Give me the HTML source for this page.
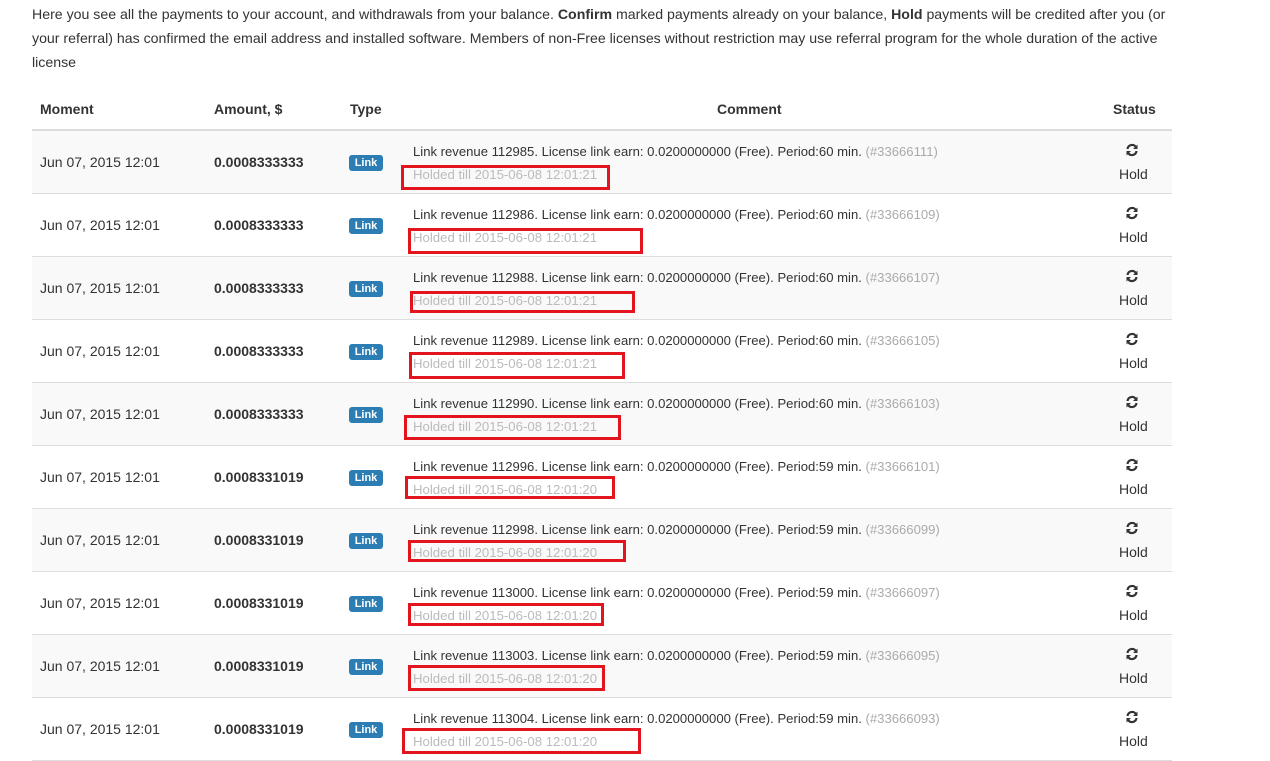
<!DOCTYPE html>
<html><head><meta charset="utf-8"><style>
body{margin:0;width:1270px;height:760px;overflow:hidden;background:#fff;font-family:"Liberation Sans",Arial,sans-serif;color:#333;position:relative}
.intro{position:absolute;left:32px;top:2px;font-size:14.15px;line-height:24px;white-space:nowrap}
.hdr{position:absolute;top:88px;left:32px;width:1140px;height:41px;border-bottom:2px solid #ddd;font-weight:bold;font-size:14px}
.hdr span{position:absolute;top:13px}
.row{position:absolute;left:32px;width:1140px;height:62px;border-bottom:1px solid #ddd;font-size:14px}
.row.g{background:#f9f9f9}
.row .d{position:absolute;left:8px;top:23px}
.row .a{position:absolute;left:182px;top:23px;font-weight:bold}
.row .l{position:absolute;left:317px;top:24px;width:34px;height:16px;background:#2c7db3;color:#fff;font-size:11px;font-weight:bold;text-align:center;line-height:16px;border-radius:3px}
.row .c1{position:absolute;left:381px;top:13px;font-size:13.1px}
.row .c1 i{font-style:normal;color:#aaa}
.row .c2{position:absolute;left:381px;top:36px;font-size:13.2px;color:#bbb}
.row .ic{position:absolute;left:1093px;top:12px}
.row .h{position:absolute;left:1087px;top:35px}
.rb{position:absolute;border:3px solid #e2141e;box-sizing:border-box}
</style></head><body>
<div class="intro">Here you see all the payments to your account, and withdrawals from your balance. <b>Confirm</b> marked payments already on your balance, <b>Hold</b> payments will be credited after you (or<br>your referral) has confirmed the email address and installed software. Members of non-Free licenses without restriction may use referral program for the whole duration of the active<br>license</div>
<div class="hdr"><span style="left:8px">Moment</span><span style="left:182px">Amount, $</span><span style="left:318px">Type</span><span style="left:685px">Comment</span><span style="left:1081px">Status</span></div>

<div class="row g" style="top:131px"><span class="d">Jun 07, 2015 12:01</span><span class="a">0.0008333333</span><span class="l">Link</span><span class="c1">Link revenue 112985. License link earn: 0.0200000000 (Free). Period:60 min. <i>(#33666111)</i></span><span class="c2">Holded till 2015-06-08 12:01:21</span><svg class="ic" width="14" height="14" viewBox="0 0 14 14"><path d="M2.5 6A4.6 4.6 0 0 1 11 4.2M11.5 8A4.6 4.6 0 0 1 3 9.8" stroke="#333" stroke-width="2.2" fill="none"/><path d="M12.5 1.5v4.5H8z M1.5 12.5V8H6z" fill="#333"/></svg><span class="h">Hold</span></div>
<div class="row" style="top:194px"><span class="d">Jun 07, 2015 12:01</span><span class="a">0.0008333333</span><span class="l">Link</span><span class="c1">Link revenue 112986. License link earn: 0.0200000000 (Free). Period:60 min. <i>(#33666109)</i></span><span class="c2">Holded till 2015-06-08 12:01:21</span><svg class="ic" width="14" height="14" viewBox="0 0 14 14"><path d="M2.5 6A4.6 4.6 0 0 1 11 4.2M11.5 8A4.6 4.6 0 0 1 3 9.8" stroke="#333" stroke-width="2.2" fill="none"/><path d="M12.5 1.5v4.5H8z M1.5 12.5V8H6z" fill="#333"/></svg><span class="h">Hold</span></div>
<div class="row g" style="top:257px"><span class="d">Jun 07, 2015 12:01</span><span class="a">0.0008333333</span><span class="l">Link</span><span class="c1">Link revenue 112988. License link earn: 0.0200000000 (Free). Period:60 min. <i>(#33666107)</i></span><span class="c2">Holded till 2015-06-08 12:01:21</span><svg class="ic" width="14" height="14" viewBox="0 0 14 14"><path d="M2.5 6A4.6 4.6 0 0 1 11 4.2M11.5 8A4.6 4.6 0 0 1 3 9.8" stroke="#333" stroke-width="2.2" fill="none"/><path d="M12.5 1.5v4.5H8z M1.5 12.5V8H6z" fill="#333"/></svg><span class="h">Hold</span></div>
<div class="row" style="top:320px"><span class="d">Jun 07, 2015 12:01</span><span class="a">0.0008333333</span><span class="l">Link</span><span class="c1">Link revenue 112989. License link earn: 0.0200000000 (Free). Period:60 min. <i>(#33666105)</i></span><span class="c2">Holded till 2015-06-08 12:01:21</span><svg class="ic" width="14" height="14" viewBox="0 0 14 14"><path d="M2.5 6A4.6 4.6 0 0 1 11 4.2M11.5 8A4.6 4.6 0 0 1 3 9.8" stroke="#333" stroke-width="2.2" fill="none"/><path d="M12.5 1.5v4.5H8z M1.5 12.5V8H6z" fill="#333"/></svg><span class="h">Hold</span></div>
<div class="row g" style="top:383px"><span class="d">Jun 07, 2015 12:01</span><span class="a">0.0008333333</span><span class="l">Link</span><span class="c1">Link revenue 112990. License link earn: 0.0200000000 (Free). Period:60 min. <i>(#33666103)</i></span><span class="c2">Holded till 2015-06-08 12:01:21</span><svg class="ic" width="14" height="14" viewBox="0 0 14 14"><path d="M2.5 6A4.6 4.6 0 0 1 11 4.2M11.5 8A4.6 4.6 0 0 1 3 9.8" stroke="#333" stroke-width="2.2" fill="none"/><path d="M12.5 1.5v4.5H8z M1.5 12.5V8H6z" fill="#333"/></svg><span class="h">Hold</span></div>
<div class="row" style="top:446px"><span class="d">Jun 07, 2015 12:01</span><span class="a">0.0008331019</span><span class="l">Link</span><span class="c1">Link revenue 112996. License link earn: 0.0200000000 (Free). Period:59 min. <i>(#33666101)</i></span><span class="c2">Holded till 2015-06-08 12:01:20</span><svg class="ic" width="14" height="14" viewBox="0 0 14 14"><path d="M2.5 6A4.6 4.6 0 0 1 11 4.2M11.5 8A4.6 4.6 0 0 1 3 9.8" stroke="#333" stroke-width="2.2" fill="none"/><path d="M12.5 1.5v4.5H8z M1.5 12.5V8H6z" fill="#333"/></svg><span class="h">Hold</span></div>
<div class="row g" style="top:509px"><span class="d">Jun 07, 2015 12:01</span><span class="a">0.0008331019</span><span class="l">Link</span><span class="c1">Link revenue 112998. License link earn: 0.0200000000 (Free). Period:59 min. <i>(#33666099)</i></span><span class="c2">Holded till 2015-06-08 12:01:20</span><svg class="ic" width="14" height="14" viewBox="0 0 14 14"><path d="M2.5 6A4.6 4.6 0 0 1 11 4.2M11.5 8A4.6 4.6 0 0 1 3 9.8" stroke="#333" stroke-width="2.2" fill="none"/><path d="M12.5 1.5v4.5H8z M1.5 12.5V8H6z" fill="#333"/></svg><span class="h">Hold</span></div>
<div class="row" style="top:572px"><span class="d">Jun 07, 2015 12:01</span><span class="a">0.0008331019</span><span class="l">Link</span><span class="c1">Link revenue 113000. License link earn: 0.0200000000 (Free). Period:59 min. <i>(#33666097)</i></span><span class="c2">Holded till 2015-06-08 12:01:20</span><svg class="ic" width="14" height="14" viewBox="0 0 14 14"><path d="M2.5 6A4.6 4.6 0 0 1 11 4.2M11.5 8A4.6 4.6 0 0 1 3 9.8" stroke="#333" stroke-width="2.2" fill="none"/><path d="M12.5 1.5v4.5H8z M1.5 12.5V8H6z" fill="#333"/></svg><span class="h">Hold</span></div>
<div class="row g" style="top:635px"><span class="d">Jun 07, 2015 12:01</span><span class="a">0.0008331019</span><span class="l">Link</span><span class="c1">Link revenue 113003. License link earn: 0.0200000000 (Free). Period:59 min. <i>(#33666095)</i></span><span class="c2">Holded till 2015-06-08 12:01:20</span><svg class="ic" width="14" height="14" viewBox="0 0 14 14"><path d="M2.5 6A4.6 4.6 0 0 1 11 4.2M11.5 8A4.6 4.6 0 0 1 3 9.8" stroke="#333" stroke-width="2.2" fill="none"/><path d="M12.5 1.5v4.5H8z M1.5 12.5V8H6z" fill="#333"/></svg><span class="h">Hold</span></div>
<div class="row" style="top:698px"><span class="d">Jun 07, 2015 12:01</span><span class="a">0.0008331019</span><span class="l">Link</span><span class="c1">Link revenue 113004. License link earn: 0.0200000000 (Free). Period:59 min. <i>(#33666093)</i></span><span class="c2">Holded till 2015-06-08 12:01:20</span><svg class="ic" width="14" height="14" viewBox="0 0 14 14"><path d="M2.5 6A4.6 4.6 0 0 1 11 4.2M11.5 8A4.6 4.6 0 0 1 3 9.8" stroke="#333" stroke-width="2.2" fill="none"/><path d="M12.5 1.5v4.5H8z M1.5 12.5V8H6z" fill="#333"/></svg><span class="h">Hold</span></div>

<div class="rb" style="left:401px;top:165px;width:209px;height:25px"></div>
<div class="rb" style="left:408px;top:228px;width:235px;height:26px"></div>
<div class="rb" style="left:410px;top:291px;width:225px;height:22px"></div>
<div class="rb" style="left:409px;top:352px;width:216px;height:27px"></div>
<div class="rb" style="left:404px;top:415px;width:217px;height:25px"></div>
<div class="rb" style="left:405px;top:476px;width:210px;height:23px"></div>
<div class="rb" style="left:408px;top:540px;width:218px;height:22px"></div>
<div class="rb" style="left:408px;top:603px;width:196px;height:23px"></div>
<div class="rb" style="left:408px;top:665px;width:197px;height:26px"></div>
<div class="rb" style="left:402px;top:728px;width:239px;height:26px"></div>
</body></html>
